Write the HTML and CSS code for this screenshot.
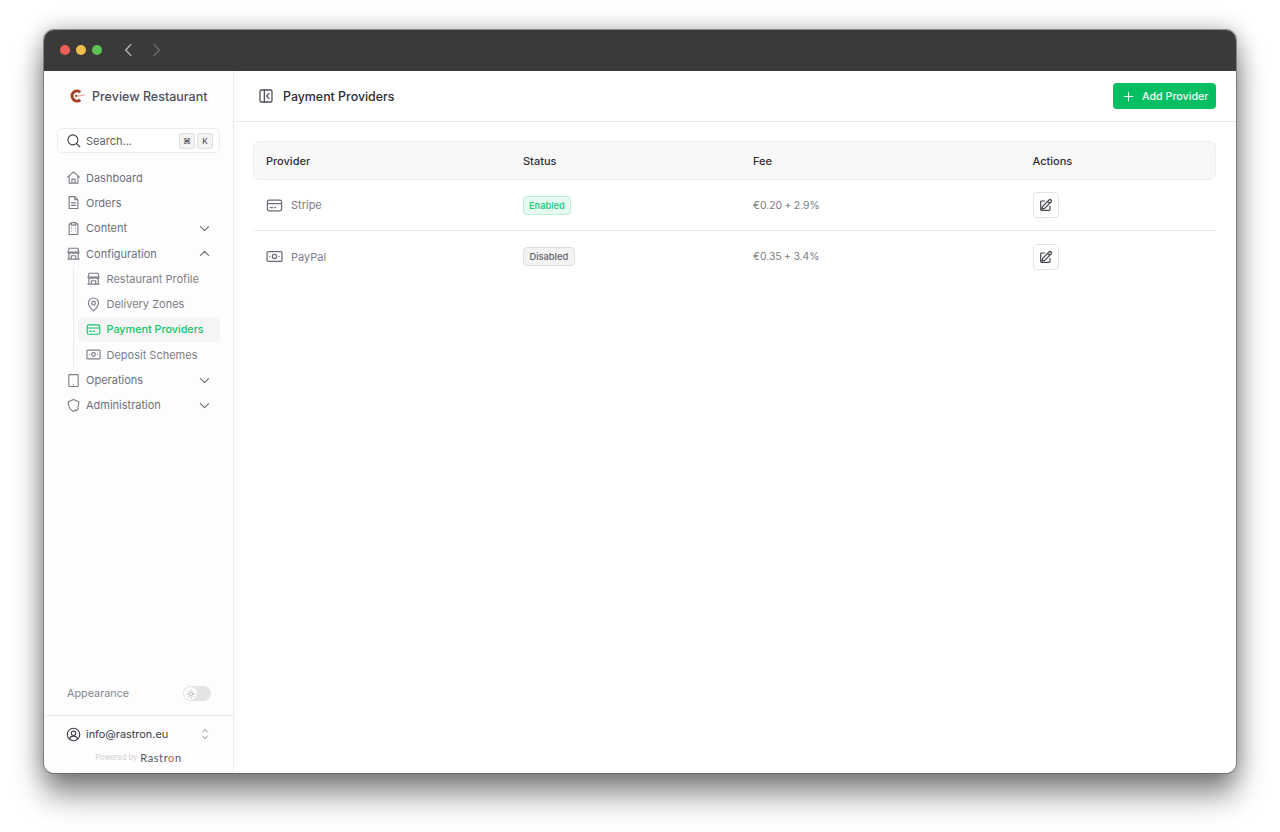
FILE: index.html
```html
<!DOCTYPE html>
<html lang="en">
<head>
<meta charset="utf-8">
<title>Payment Providers</title>
<link rel="stylesheet" href="styles.css">
</head>
<body>
<svg class="sprite" width="0" height="0" aria-hidden="true">
  <symbol id="i-down" viewBox="0 0 24 24"><path d="M4.500 8.500 12 16l7.500-7.500"/></symbol>
  <symbol id="i-up" viewBox="0 0 24 24"><path d="M4.500 15.500 12 8l7.500 7.500"/></symbol>
  <symbol id="i-store" viewBox="0 0 24 24"><path d="M3.500 9.500 5 3.500h14l1.500 6M3 9.500h18M3 9.500c0 3 5.500 3 6 0 .5 3 5.500 3 6 0 .5 3 6 3 6 0M4.500 12.500V21h15v-8.500M3 21h18M8.500 21v-5.500h7V21"/></symbol>
  <symbol id="i-card" viewBox="0 0 24 24"><rect x="2" y="4.500" width="20" height="15" rx="2.500"/><path d="M2 9.500h20M6 15h3M12 15h1.500"/></symbol>
  <symbol id="i-cash" viewBox="0 0 24 24"><rect x="1.500" y="5" width="21" height="14" rx="1.500"/><circle cx="12" cy="12" r="3"/><path d="M5.500 12h.01M18.500 12h.01"/></symbol>
  <symbol id="i-edit" viewBox="0 0 24 24"><path d="M16.500 4.500a2.100 2.100 0 0 1 3 3L10 17l-4 1 1-4zM14.500 6.500l3 3M18 14v4.500a1.500 1.500 0 0 1-1.500 1.500h-11A1.500 1.500 0 0 1 4 18.500v-11A1.500 1.500 0 0 1 5.500 6H10"/></symbol>
</svg>
<div class="window">
  <header class="titlebar">
    <span class="light red"></span><span class="light yellow"></span><span class="light green"></span>
    <svg class="nav-arrow back" viewBox="0 0 12 20"><path d="M9.500 2 2 10l7.500 8"/></svg>
    <svg class="nav-arrow forward" viewBox="0 0 12 20"><path d="M2.500 2 10 10l-7.500 8"/></svg>
  </header>
  <div class="app">
    <aside class="sidebar">
      <div class="brand">
        <svg class="brand-logo" viewBox="0 0 16 16"><path class="logo-ring" d="M11.300 4.200A5 5 0 1 0 11.300 11.800" /><circle class="logo-dot" cx="7.200" cy="8" r="1.200"/><path class="logo-hand" d="M7 8.300 15.500 7"/></svg>
        <span>Preview Restaurant</span>
      </div>
      <div class="search">
        <svg class="icon search-icon" viewBox="0 0 24 24"><circle cx="11" cy="11" r="8"/><path d="m17 17 5 5"/></svg>
        <span class="search-text">Search...</span>
        <kbd>⌘</kbd><kbd>K</kbd>
      </div>
      <nav class="nav">
        <a class="nav-item"><svg class="icon" viewBox="0 0 24 24"><path d="M2.500 11.500 12 3l9.500 8.500M5 9.500V21h14V9.500M9.500 21v-6.500h5V21"/></svg><span>Dashboard</span></a>
        <a class="nav-item"><svg class="icon" viewBox="0 0 24 24"><path d="M5 2.500h9l5 5v14H5zM14 2.500v5h5M8.500 12.500h7M8.500 16.500h7"/></svg><span>Orders</span></a>
        <a class="nav-item"><svg class="icon" viewBox="0 0 24 24"><path d="M8.500 4.500H5v17h14v-17h-3.500M8.500 2.500h7v4h-7zM9 11h.01M15 11h.01M9 16h.01M15 16h.01"/></svg><span>Content</span><svg class="chev"><use href="#i-down"/></svg></a>
        <a class="nav-item"><svg class="icon"><use href="#i-store"/></svg><span>Configuration</span><svg class="chev"><use href="#i-up"/></svg></a>
        <div class="subnav">
          <a class="nav-item sub"><svg class="icon"><use href="#i-store"/></svg><span>Restaurant Profile</span></a>
          <a class="nav-item sub"><svg class="icon" viewBox="0 0 24 24"><path d="M12 22s8-6.500 8-12.500a8 8 0 1 0-16 0C4 15.500 12 22 12 22z"/><circle cx="12" cy="10" r="3"/></svg><span>Delivery Zones</span></a>
          <a class="nav-item sub active"><svg class="icon"><use href="#i-card"/></svg><span>Payment Providers</span></a>
          <a class="nav-item sub"><svg class="icon"><use href="#i-cash"/></svg><span>Deposit Schemes</span></a>
        </div>
        <a class="nav-item"><svg class="icon" viewBox="0 0 24 24"><path d="M5.500 2.500h13a1 1 0 0 1 1 1v17a1 1 0 0 1-1 1h-13a1 1 0 0 1-1-1v-17a1 1 0 0 1 1-1zM12 18h.01"/></svg><span>Operations</span><svg class="chev"><use href="#i-down"/></svg></a>
        <a class="nav-item"><svg class="icon" viewBox="0 0 24 24"><path d="M12 2.500 3.500 6c0 8 2.500 13 8.500 15.500 1.200-.5 2-1 3-1.700M12 2.500 20.500 6c0 3.500-.5 6.500-1.500 9M15 19l1.500 1.500L20 17"/></svg><span>Administration</span><svg class="chev"><use href="#i-down"/></svg></a>
      </nav>
      <div class="appearance">
        <span>Appearance</span>
        <span class="toggle"><span class="knob"><svg viewBox="0 0 24 24"><circle cx="12" cy="12" r="4"/><path d="M12 2v3M12 19v3M2 12h3M19 12h3M5 5l2 2M17 17l2 2M5 19l2-2M17 7l2-2"/></svg></span></span>
      </div>
      <div class="account">
        <div class="account-row">
          <svg class="icon" viewBox="0 0 24 24"><circle cx="12" cy="12" r="10"/><circle cx="12" cy="10" r="3.500"/><path d="M5.500 19c1-3 3.500-4.500 6.500-4.500s5.500 1.500 6.500 4.500"/></svg>
          <span class="email">info@rastron.eu</span>
          <svg class="updown" viewBox="0 0 12 20"><path d="M2.500 7 6 3l3.500 4M2.500 13 6 17l3.500-4"/></svg>
        </div>
        <div class="powered"><span>Powered by</span><b>Rastr<i>o</i>n</b></div>
      </div>
    </aside>
    <main class="main">
      <div class="topbar">
        <svg class="panel-icon" viewBox="0 0 24 24"><rect x="3" y="3" width="18" height="18" rx="2"/><path d="M9.500 3v18M16.500 8.500 13 12l3.500 3.500"/></svg>
        <h1>Payment Providers</h1>
        <button class="add-btn"><svg viewBox="0 0 24 24"><path d="M12 4v16M4 12h16"/></svg>Add Provider</button>
      </div>
      <div class="content">
        <div class="row head">
          <div>Provider</div><div>Status</div><div>Fee</div><div>Actions</div>
        </div>
        <div class="row body-row">
          <div class="provider"><svg class="icon provider-icon"><use href="#i-card"/></svg>Stripe</div>
          <div><span class="badge enabled">Enabled</span></div>
          <div class="fee">€0.20 + 2.9%</div>
          <div><button class="edit"><svg><use href="#i-edit"/></svg></button></div>
        </div>
        <div class="row body-row">
          <div class="provider"><svg class="icon provider-icon"><use href="#i-cash"/></svg>PayPal</div>
          <div><span class="badge disabled">Disabled</span></div>
          <div class="fee">€0.35 + 3.4%</div>
          <div><button class="edit"><svg><use href="#i-edit"/></svg></button></div>
        </div>
      </div>
    </main>
  </div>
</div>
</body>
</html>
```
FILE: styles.css
```css
* { box-sizing: border-box; }
html, body { height: 100%; }
body {
  margin: 0;
  padding: 30px 44px 59px;
  background: #fff;
  font-family: Inter, "Liberation Sans", sans-serif;
  font-size: 11px;
  overflow: hidden;
}
.sprite { position: absolute; }
svg { fill: none; stroke: currentColor; stroke-linecap: round; stroke-linejoin: round; }
.window {
  height: 743px;
  display: flex;
  flex-direction: column;
  border-radius: 10px;
  overflow: hidden;
  background: #fff;
  box-shadow: 0 0 0 1px rgba(90, 90, 90, .6), 0 22px 30px rgba(0, 0, 0, .45), 0 0 22px rgba(0, 0, 0, .3);
}
.titlebar {
  height: 41px;
  flex: none;
  background: #3a3a39;
  display: flex;
  align-items: center;
  padding: 0 0 1px 16px;
  gap: 6px;
}
.light { width: 10px; height: 10px; border-radius: 50%; }
.red { background: #ec5f57; }
.yellow { background: #f4bd4f; }
.green { background: #5fc453; }
.nav-arrow { width: 9px; height: 14px; stroke-width: 1.800; }
.back { color: #bdbdbd; margin-left: 16px; }
.forward { color: #707070; margin-left: 13px; }
.app { flex: 1; display: flex; min-height: 0; }
.sidebar {
  width: 190px;
  flex: none;
  background: #fdfdfd;
  border-right: 1px solid #ececec;
  display: flex;
  flex-direction: column;
  color: #6f707a;
}
.brand {
  height: 50px;
  flex: none;
  display: flex;
  align-items: center;
  padding-left: 25px;
  gap: 7px;
  font-size: 12.500px;
  font-weight: 500;
  color: #4e4f58;
}
.brand-logo { width: 16px; height: 16px; }
.logo-ring { stroke: #a33f25; stroke-width: 3; stroke-linecap: butt; }
.logo-dot { stroke: none; fill: #a33f25; }
.logo-hand { stroke: #d98c78; stroke-width: .8; }
.search {
  margin: 7px 13px 0;
  height: 25px;
  border: 1px solid #ececec;
  border-radius: 6px;
  background: #fff;
  display: flex;
  align-items: center;
  padding: 0 6px 0 8px;
  gap: 2px;
  color: #5d5e67;
  font-size: 11px;
}
.search-text { flex: 1; margin-left: 3px; }
.search-icon { color: #3b3c44; }
kbd {
  width: 16px;
  height: 16px;
  border: 1px solid #dfdfdf;
  border-radius: 3px;
  background: #f3f3f3;
  font-family: Inter, sans-serif;
  font-size: 8px;
  font-weight: 500;
  display: flex;
  align-items: center;
  justify-content: center;
  color: #55565e;
}
.icon { width: 15px; height: 15px; flex: none; stroke-width: 1.800; }
.nav { margin-top: 12px; padding: 0 13px; flex: 1; }
.nav-item {
  height: 25.300px;
  display: flex;
  align-items: center;
  gap: 5.500px;
  padding-left: 8.500px;
  color: #6f707a;
  font-weight: 400;
}
.nav-item .icon { color: #7c7d86; }
.nav-item > span { flex: 1; }
.chev { width: 13px; height: 13px; stroke-width: 2; margin-right: 9px; color: #666770; }
.subnav { margin-left: 16px; padding-left: 4px; border-left: 1px solid #ececec; }
.nav-item.sub { border-radius: 5px; padding-left: 8px; color: #7d7e87; }
.nav-item.active { background: #f5f5f5; color: #12c46b; font-weight: 500; font-size: 10.800px; }
.nav-item.active .icon { color: #12c46b; }
.appearance {
  height: 38px;
  flex: none;
  display: flex;
  align-items: center;
  justify-content: space-between;
  padding: 0 22px 5px 23px;
  color: #85868e;
  font-size: 10.800px;
}
.toggle { width: 28px; height: 15px; border-radius: 8px; background: #e4e4e6; padding: 1px; display: block; }
.knob { width: 13px; height: 13px; border-radius: 50%; background: #fff; display: flex; align-items: center; justify-content: center; }
.knob svg { width: 10px; height: 10px; stroke-width: 1.500; color: #9a9aa0; }
.account { height: 58px; flex: none; border-top: 1px solid #ececec; }
.account-row {
  height: 35px;
  display: flex;
  align-items: center;
  padding: 1px 24px 0 22px;
  gap: 5px;
  color: #3f4048;
  font-size: 10.900px;
}
.account-row .icon { color: #3f4048; }
.email { flex: 1; }
.updown { width: 8px; height: 14px; stroke-width: 1.500; color: #8a8a90; }
.powered {
  display: flex;
  justify-content: center;
  align-items: center;
  gap: 3px;
  color: #d0d0d2;
  font-size: 7.500px;
}
.powered b { font-family: Lato, sans-serif; font-size: 11px; font-weight: 400; color: #55565c; letter-spacing: .6px; }
.powered i { font-style: normal; color: #c0664f; }
.main { flex: 1; min-width: 0; background: #fff; }
.topbar {
  height: 51px;
  border-bottom: 1px solid #ececec;
  display: flex;
  align-items: center;
  padding: 0 20px 0 24px;
}
.panel-icon { width: 16px; height: 16px; stroke-width: 1.900; color: #4e4f56; }
h1 { margin: 0 0 0 9px; flex: 1; font-size: 12.400px; font-weight: 500; color: #2c2d33; }
.add-btn {
  width: 103px;
  height: 26px;
  flex: none;
  border: 0;
  border-radius: 4px;
  background: #03bf62;
  color: #f2fff8;
  font: 500 10.700px Inter, sans-serif;
  white-space: nowrap;
  display: flex;
  align-items: center;
  padding-left: 9px;
  gap: 7px;
}
.add-btn svg { width: 13px; height: 13px; stroke-width: 2; flex: none; }
.content { padding: 19px 20px 0 19px; }
.row {
  display: grid;
  grid-template-columns: 257px 230px 279.500px 1fr;
  align-items: center;
  padding-left: 13px;
}
.head {
  height: 39px;
  background: #f8f8f8;
  border: 1px solid #eeeeee;
  border-radius: 7px;
  padding-left: 12px;
  font-weight: 500;
  color: #2f3036;
}
.body-row {
  height: 51px;
  border-bottom: 1px solid #ececec;
  color: #7c7d85;
}
.body-row:last-child { border-bottom: 0; }
.provider { display: flex; align-items: center; gap: 8px; }
.provider-icon { width: 17px; height: 17px; color: #6c6d75; }
.fee { font-size: 10.400px; word-spacing: -.5px; }
.badge {
  display: inline-block;
  height: 19px;
  line-height: 17px;
  padding: 0 5px;
  border-radius: 4px;
  border: 1px solid;
  font-size: 9.300px;
  font-weight: 500;
}
.disabled { padding: 0 5.500px; }
.enabled { background: #e5faf0; border-color: #bdeed5; color: #1cc374; }
.disabled { background: #f3f3f3; border-color: #dedede; color: #5f6067; }
.edit {
  width: 26px;
  height: 26px;
  padding: 0;
  border: 1px solid #e4e4e4;
  border-radius: 4px;
  background: #fff;
  display: flex;
  align-items: center;
  justify-content: center;
  color: #46474e;
}
.edit svg { width: 16px; height: 16px; stroke-width: 1.800; }
```
